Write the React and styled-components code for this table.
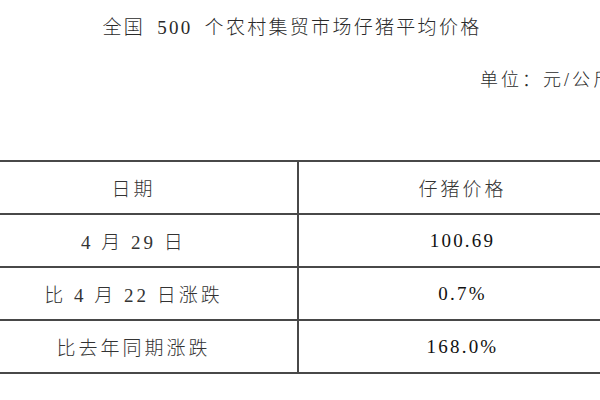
import React from "react";
import styled, { createGlobalStyle } from "styled-components";

const Global = createGlobalStyle`
  html, body { margin: 0; padding: 0; background: #fff; overflow: hidden; }
`;

const FONT = `"Liberation Serif", "Noto Sans CJK SC", serif`;

const Page = styled.div`
  width: 600px;
  height: 400px;
  overflow: hidden;
  background: #fff;
  font-family: ${FONT};
  color: #2a2a2a;
`;

const Sheet = styled.div`
  width: 660px;
  margin-left: -32px;
  display: flex;
  flex-direction: column;
`;

const Title = styled.div`
  margin-top: 18px;
  padding-right: 12px;
  text-align: center;
  font-family: ${FONT};
  font-size: 19px;
  font-weight: 300;
  line-height: 20px;
  letter-spacing: 2.3px;
  word-spacing: 5px;
  white-space: nowrap;
`;

const Unit = styled.div`
  margin-top: 32px;
  padding-right: 14px;
  text-align: right;
  font-family: ${FONT};
  font-size: 18px;
  font-weight: 300;
  line-height: 20px;
  letter-spacing: 3px;
  white-space: nowrap;
`;

const Table = styled.table`
  margin-top: 70px;
  width: 100%;
  border-collapse: collapse;
  table-layout: fixed;
`;

const Cell = styled.td`
  height: 51px;
  padding: 0;
  border: 2px solid #484848;
  text-align: center;
  vertical-align: middle;
  font-family: ${FONT};
  font-size: 19px;
  font-weight: 300;
  letter-spacing: ${(p) => (p.$wide ? "3px" : "2.2px")};
  white-space: nowrap;
  color: ${(p) => (p.$num ? "#111" : "#333")};
`;

const rows = [
  ["日期", "仔猪价格", true],
  ["4 月 29 日", "100.69"],
  ["比 4 月 22 日涨跌", "0.7%"],
  ["比去年同期涨跌", "168.0%"],
];

export default function App() {
  return (
    <Page>
      <Global />
      <Sheet>
        <Title>全国 500 个农村集贸市场仔猪平均价格</Title>
        <Unit>单位：元/公斤</Unit>
        <Table>
          <tbody>
            {rows.map(([a, b, head]) => (
              <tr key={a}>
                <Cell $wide>{a}</Cell>
                <Cell $wide={head} $num={!head}>{b}</Cell>
              </tr>
            ))}
          </tbody>
        </Table>
      </Sheet>
    </Page>
  );
}
